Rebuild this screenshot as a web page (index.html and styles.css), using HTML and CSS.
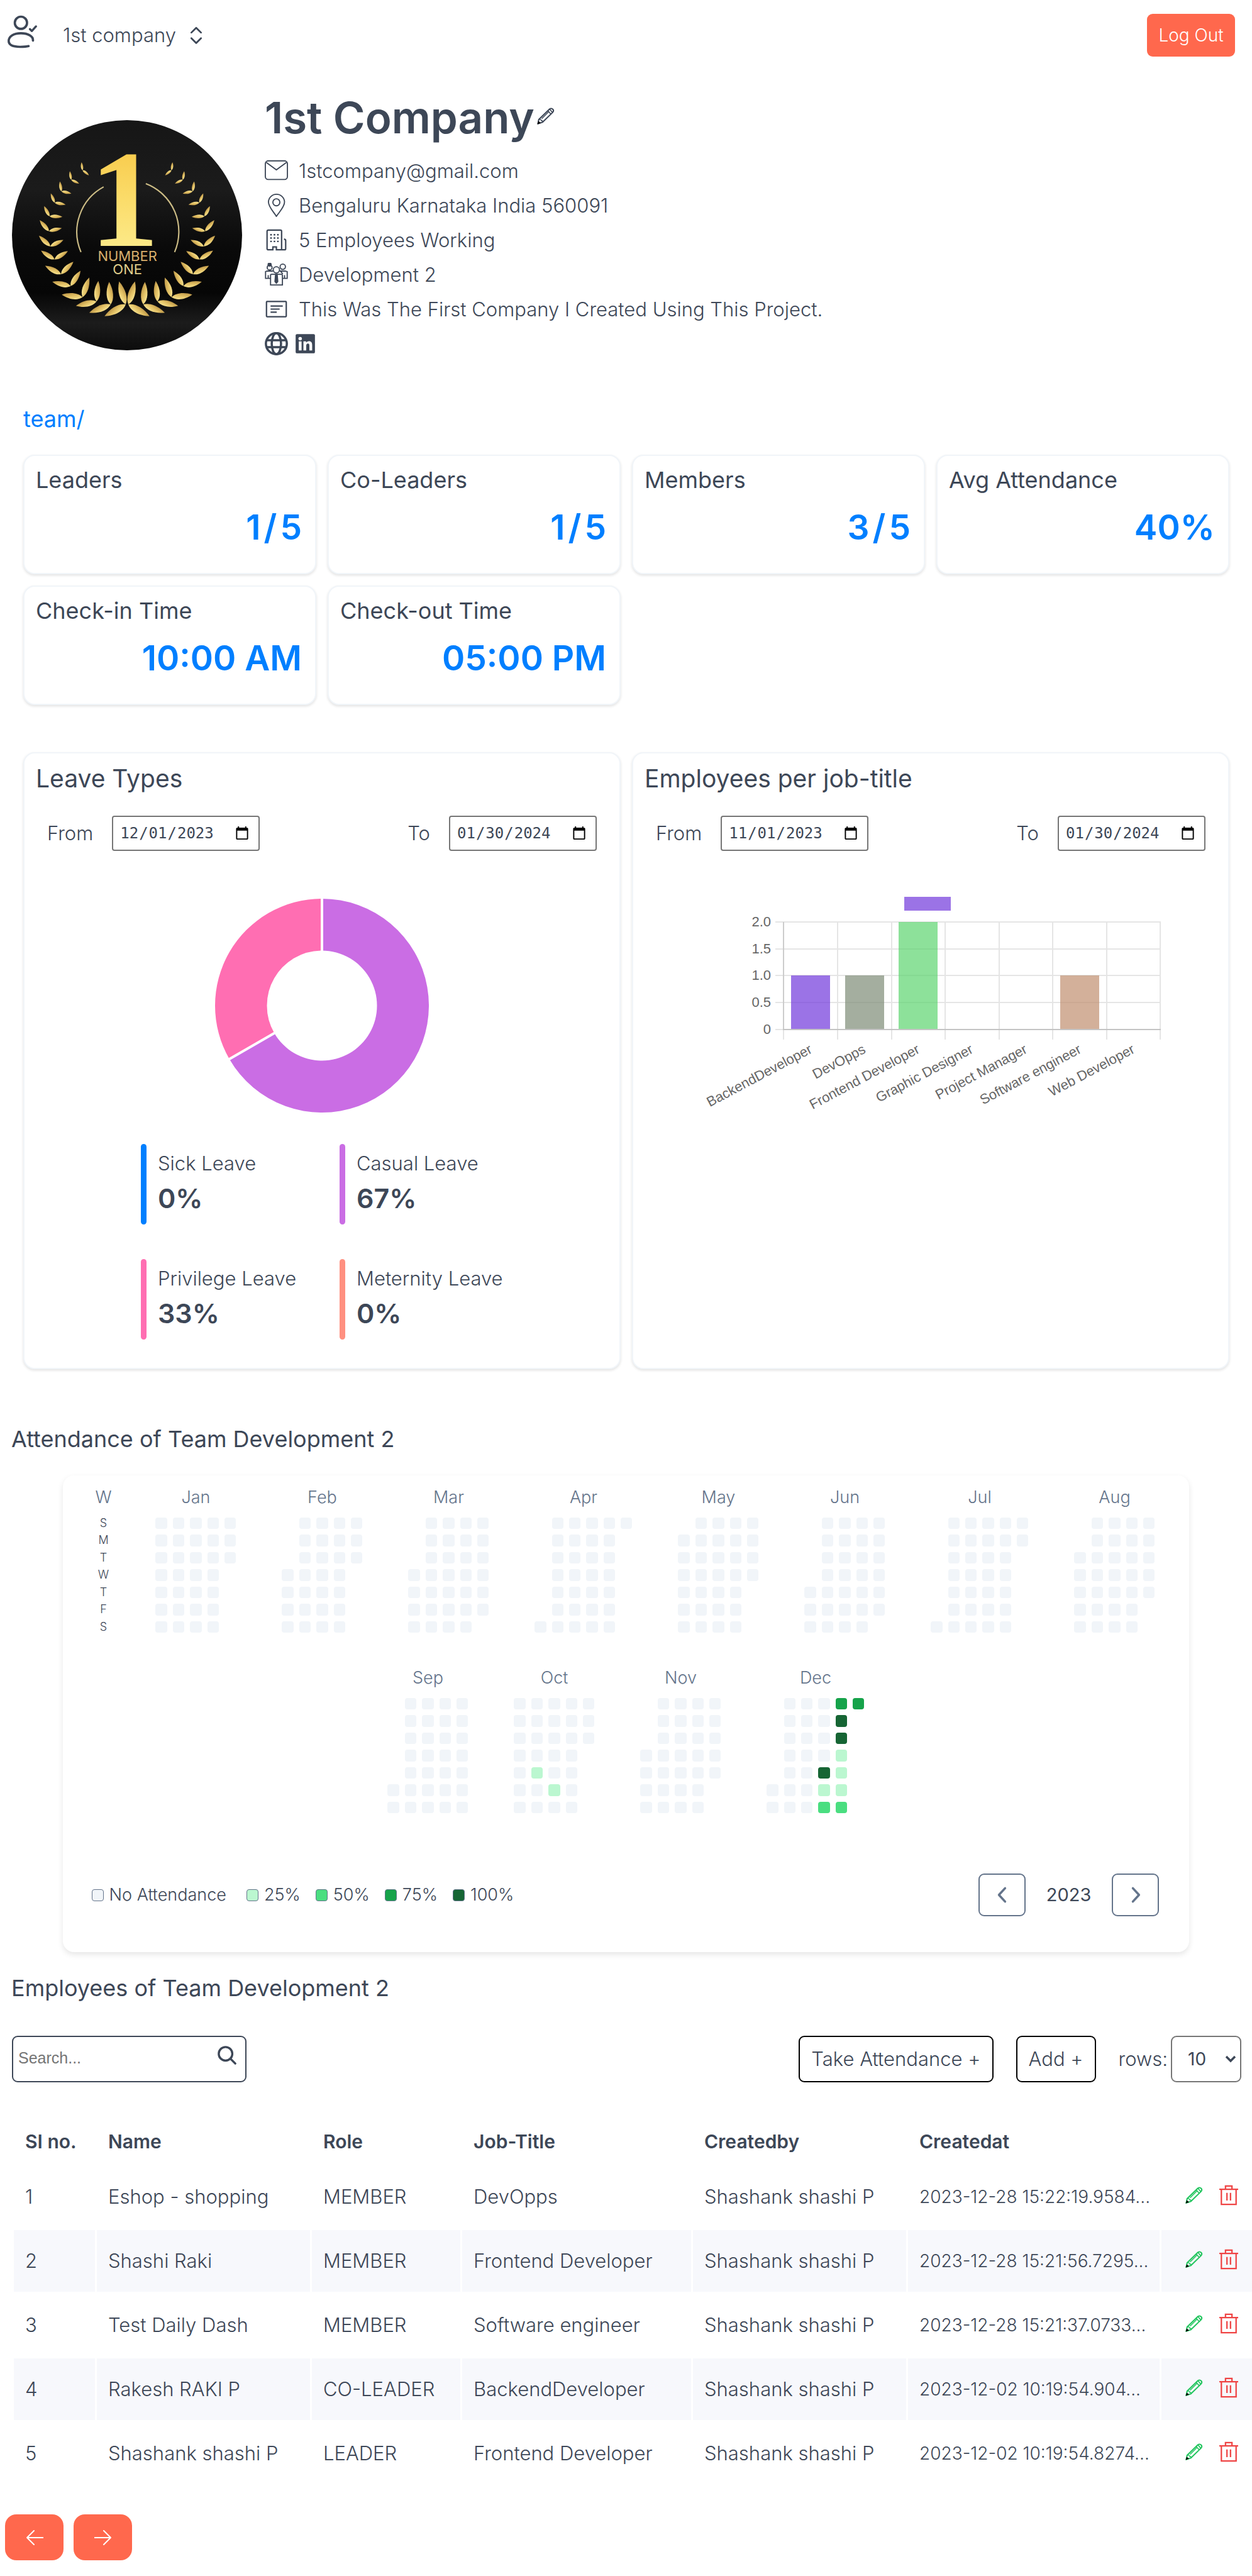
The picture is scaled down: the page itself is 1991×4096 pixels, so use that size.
FILE: index.html
```html
<!DOCTYPE html>
<html lang="en">
<head>
<meta charset="utf-8">
<meta name="viewport" content="width=device-width, initial-scale=1">
<title>1st company</title>
<link rel="stylesheet" href="styles.css">
</head>
<body>
<svg class="sprite" aria-hidden="true">
  <defs>
    <symbol id="i-pencil" viewBox="0 0 30 30">
      <path d="M3 21.500 L21.500 3.500 Q24.500 1.500 27 4 Q29.300 6.700 26.500 9.500 L9.500 26 L1.500 28.800 Z" fill="none" stroke="currentColor" stroke-width="2.200" stroke-linejoin="round"/>
      <path d="M18.500 6.500 L23.500 12 M21.500 4 L26.300 9.200" fill="none" stroke="currentColor" stroke-width="1.800"/>
      <path d="M3 21.500 Q7 20.500 7.500 23.500 Q10 23 9.500 26 M8 20 L19.500 8.500" fill="none" stroke="currentColor" stroke-width="1.600"/>
      <path d="M2.400 24 L6.500 27.200 L0.500 29.500 Z" fill="#000"/>
    </symbol>
    <symbol id="i-trash" viewBox="0 0 32 34">
      <path d="M0 7H32M3.500 7V32.500H28.500V7M10.500 7V1.500H21.500V7M13 13V26M19 13V26" fill="none" stroke="currentColor" stroke-width="2.400"/>
    </symbol>
    <linearGradient id="gold" x1="0" y1="0" x2="0" y2="1">
      <stop offset="0" stop-color="#f7c23c"/><stop offset=".5" stop-color="#fbdc6a"/><stop offset="1" stop-color="#fdf29a"/>
    </linearGradient>
    <linearGradient id="leafGold" x1="0" y1="0" x2="1" y2="1">
      <stop offset="0" stop-color="#fff0a0"/><stop offset=".5" stop-color="#e2c064"/><stop offset="1" stop-color="#a8803a"/>
    </linearGradient>
    <linearGradient id="slate" x1="0" y1="0" x2="0" y2="1">
      <stop offset="0" stop-color="#161616"/><stop offset=".3" stop-color="#1b1b1b"/><stop offset=".55" stop-color="#0a0a0a"/><stop offset=".75" stop-color="#060606"/><stop offset=".88" stop-color="#1c1c1c"/><stop offset="1" stop-color="#0c0c0c"/>
    </linearGradient>
    <path id="leaf" d="M0 0C22 -20 62 -20 100 0C62 18 22 18 0 0Z" fill="url(#leafGold)"/>
    <g id="branch">
      <use href="#leaf" transform="translate(430 318) rotate(-97) scale(.42)"/><use href="#leaf" transform="translate(430 318) rotate(39) scale(.43)"/>
      <use href="#leaf" transform="translate(371 368) rotate(-99) scale(.45)"/><use href="#leaf" transform="translate(371 368) rotate(26) scale(.46)"/>
      <use href="#leaf" transform="translate(320 428) rotate(-99) scale(.52)"/><use href="#leaf" transform="translate(320 428) rotate(13) scale(.53)"/>
      <use href="#leaf" transform="translate(285 487) rotate(-113) scale(.52)"/><use href="#leaf" transform="translate(285 487) rotate(11) scale(.58)"/>
      <use href="#leaf" transform="translate(258 558) rotate(-118) scale(.6)"/><use href="#leaf" transform="translate(258 558) rotate(3) scale(.67)"/>
      <use href="#leaf" transform="translate(255 636) rotate(-130) scale(.75)"/><use href="#leaf" transform="translate(255 636) rotate(-13) scale(.69)"/>
      <use href="#leaf" transform="translate(262 715) rotate(-137) scale(.81)"/><use href="#leaf" transform="translate(262 715) rotate(-26) scale(.76)"/>
      <use href="#leaf" transform="translate(284 783) rotate(-147) scale(.84)"/><use href="#leaf" transform="translate(284 783) rotate(-32) scale(.82)"/>
      <use href="#leaf" transform="translate(318 860) rotate(-152) scale(.94)"/><use href="#leaf" transform="translate(318 860) rotate(-45) scale(.91)"/>
      <use href="#leaf" transform="translate(368 922) rotate(-167) scale(.98)"/><use href="#leaf" transform="translate(368 922) rotate(-57) scale(.95)"/>
      <use href="#leaf" transform="translate(430 980) rotate(-173) scale(1.09)"/><use href="#leaf" transform="translate(430 980) rotate(-71) scale(1.08)"/>
      <use href="#leaf" transform="translate(503 1002) rotate(168) scale(1.1)"/><use href="#leaf" transform="translate(503 1002) rotate(-85) scale(1.07)"/>
      <use href="#leaf" transform="translate(577 1018) rotate(159) scale(1.2)"/><use href="#leaf" transform="translate(577 1018) rotate(-94) scale(1.18)"/>
      <use href="#leaf" transform="translate(655 1018) rotate(151) scale(1.26)"/><use href="#leaf" transform="translate(655 1018) rotate(-106) scale(1.25)"/>
    </g>
  </defs>
</svg>

<header class="topbar">
  <svg class="user-icon" viewBox="41 78 158 174" fill="none" stroke="currentColor" stroke-width="12" stroke-linecap="round" aria-hidden="true">
    <circle cx="111" cy="118" r="32"/>
    <path d="M174 211C176 188 148 173 111 173C70 173 47 191 47 213C47 238 75 244 107 244C127 244 141 243 151 240"/>
    <path d="M158 151L168 161L190 137" stroke-width="11" stroke-linejoin="round"/>
  </svg>
  <button class="company-switch" type="button">1st company
    <svg class="updown" viewBox="1000 136 64 94" fill="none" stroke="currentColor" stroke-width="9" stroke-linecap="round" stroke-linejoin="round" aria-hidden="true"><path d="M1007 168L1032 143L1057 168M1007 197L1032 222L1057 197"/></svg>
  </button>
  <button class="logout" type="button">Log Out</button>
</header>

<main>
<section class="profile">
  <svg class="avatar" viewBox="62 57 1200 1200" role="img" aria-label="Number one">
    <circle cx="662" cy="657" r="600" fill="url(#slate)"/>
    <use href="#branch"/>
    <use href="#branch" transform="translate(1324 0) scale(-1 1)"/>
    <path d="M540 405A267 267 0 0 0 422 745M760 388A268 268 0 0 1 910 745" fill="none" stroke="#cdbd86" stroke-width="7"/>
    <text class="logo-one" x="648" y="714">1</text>
    <text class="logo-word" x="664" y="790" fill="#d9ae6c">NUMBER</text>
    <text class="logo-word" x="664" y="860" fill="#e0cf8c">ONE</text>
  </svg>
  <div class="profile-body">
    <div class="name-row">
      <h1>1st Company</h1>
      <button class="icon-btn" type="button" aria-label="Edit company"><svg class="icon-28"><use href="#i-pencil"/></svg></button>
    </div>
    <ul class="facts">
      <li><svg class="fact-icon" viewBox="0 0 20 20" fill="none" stroke="currentColor"><rect x=".5" y="1.500" width="19" height="16" rx="2.500"/><path d="M1.300 2.800L10 9.200L18.700 2.800"/></svg>1stcompany@gmail.com</li>
      <li><svg class="fact-icon" viewBox="0 0 20 20" fill="none" stroke="currentColor"><path d="M10 19.500C8 16 3.200 11.500 3.200 7.200A6.900 6.700 0 0 1 17 7.200C17 11.500 12.200 16 10 19.500Z"/><circle cx="10" cy="7.400" r="3"/></svg>Bengaluru Karnataka India 560091</li>
      <li><svg class="fact-icon" viewBox="0 0 20 20" fill="none" stroke="currentColor" stroke-width="1.200"><path d="M7 18.500H3A1 1 0 0 1 2 17.500V2.500A1 1 0 0 1 3 1.500H13.500A1 1 0 0 1 14.500 2.500V18.500H10V16H7ZM14.500 18.500H17A1 1 0 0 0 18 17.500V10.500Q18 9.500 16.500 9.300"/><path d="M4.700 5.500H12M4.700 8.400H12M4.700 11.300H12" stroke-width="1.300" stroke-dasharray="1.400 1.550"/></svg>5 Employees Working</li>
      <li><svg class="fact-icon" viewBox="0 0 20 20" fill="none" stroke="currentColor" stroke-width="1"><circle cx="4.200" cy="4" r="2.100"/><circle cx="4.200" cy="1.500" r="1.300" fill="currentColor"/><circle cx="15.500" cy="3.300" r="2.300"/><circle cx="10" cy="6" r="2.700" fill="#fff"/><path d="M7 7H2L.7 7.500V13.300H4.800M13 7H17.500L19.300 7.500V13.300H15.500M3 10.500V13M17 10.500V13M5 10V19H15.200V10.500Q15 9.800 14 9.800H6Q5 9.800 5 10.500M13.500 7L15.500 9.500"/><path d="M9.300 10H10.700L11.200 16L10 17.500L8.800 16Z" fill="currentColor"/></svg>Development 2</li>
      <li><svg class="fact-icon" viewBox="0 0 20 20" fill="none" stroke="currentColor" stroke-width="1.200"><rect x="1.500" y="3.500" width="17" height="13" rx=".5"/><path d="M5 7.400H15.500M5 10H12.800M5 12.600H10.300"/></svg>This Was The First Company I Created Using This Project.</li>
    </ul>
    <div class="socials">
      <a href="#website" aria-label="Website"><svg class="fact-icon" viewBox="0 0 20 20" fill="none" stroke="currentColor" stroke-width="1.900"><circle cx="10" cy="10" r="9"/><ellipse cx="10" cy="10" rx="4" ry="9"/><path d="M1.500 7H18.500M1.500 13H18.500"/></svg></a>
      <a href="#linkedin" aria-label="LinkedIn"><svg class="fact-icon" viewBox="0 0 20 20"><rect x="1.700" y="1.700" width="16.600" height="16.600" rx="1.200" fill="currentColor"/><g fill="#fff"><circle cx="5.600" cy="5.700" r="1.500"/><rect x="4.400" y="8" width="2.400" height="7.800"/><path d="M8.400 8H10.700V9.100C11.200 8.300 12 7.800 13.100 7.800C15.200 7.800 15.900 9.100 15.900 11.200V15.800H13.500V11.700C13.500 10.600 13.300 9.900 12.300 9.900C11.300 9.900 10.800 10.600 10.800 11.700V15.800H8.400Z"/></g></svg></a>
    </div>
  </div>
</section>

<section class="overview">
  <a class="crumb" href="#team">team/</a>
  <div class="stats">
    <article class="card stat"><h2>Leaders</h2><p><span>1</span><span>/</span><span>5</span></p></article>
    <article class="card stat"><h2>Co-Leaders</h2><p><span>1</span><span>/</span><span>5</span></p></article>
    <article class="card stat"><h2>Members</h2><p><span>3</span><span>/</span><span>5</span></p></article>
    <article class="card stat"><h2>Avg Attendance</h2><p>40%</p></article>
    <article class="card stat"><h2>Check-in Time</h2><p>10:00 AM</p></article>
    <article class="card stat"><h2>Check-out Time</h2><p>05:00 PM</p></article>
  </div>

  <div class="charts">
    <article class="card chart">
      <h2>Leave Types</h2>
      <div class="range">
        <label>From <input type="date" value="2023-12-01"></label>
        <label>To <input type="date" value="2024-01-30"></label>
      </div>
      <svg class="donut" viewBox="0 0 340 340" role="img" aria-label="Leave types: casual 67%, privilege 33%">
        <path d="M170 0A170 170 0 1 1 22.780 255L94.220 213.750A87.500 87.500 0 1 0 170 82.500Z" fill="#ca6de4"/>
        <path d="M22.780 255A170 170 0 0 1 170 0V82.500A87.500 87.500 0 0 0 94.220 213.750Z" fill="#ff6eb2"/>
        <path d="M170 -2V84M21 256L96 212.700" stroke="#fff" stroke-width="4"/>
      </svg>
      <ul class="leave-legend">
        <li class="sick"><span>Sick Leave</span><strong>0%</strong></li>
        <li class="casual"><span>Casual Leave</span><strong>67%</strong></li>
        <li class="privilege"><span>Privilege Leave</span><strong>33%</strong></li>
        <li class="maternity"><span>Meternity Leave</span><strong>0%</strong></li>
      </ul>
    </article>

    <article class="card chart">
      <h2>Employees per job-title</h2>
      <div class="range">
        <label>From <input type="date" value="2023-11-01"></label>
        <label>To <input type="date" value="2024-01-30"></label>
      </div>
      <svg class="bars" viewBox="0 0 732 366" role="img" aria-label="Employees per job title">
        <g stroke="#000" stroke-opacity=".1" stroke-width="2">
          <path d="M119 58H732M119 101H732M119 143H732M119 186H732M218 58V245M304 58V245M389 58V245M475 58V245M560 58V245M646 58V245M731 58V245"/>
          <path d="M119 229H132M132 229V245"/>
        </g>
        <path d="M132 58V229" stroke="#ccc" stroke-width="2"/><path d="M131 229H732" stroke="#c4c4c4" stroke-width="2"/>
        <g fill-opacity=".7">
          <rect x="324" y="18" width="74" height="22" fill="#7038db"/>
          <rect x="144" y="143" width="62" height="85" fill="#7038db"/>
          <rect x="230" y="143" width="62" height="85" fill="#7d8b76"/>
          <rect x="315" y="58" width="62" height="170" fill="#5cd46f"/>
          <rect x="572" y="143" width="62" height="85" fill="#c08e6f"/>
        </g>
        <g class="axis">
          <text x="112" y="65">2.0</text><text x="112" y="108">1.5</text><text x="112" y="150">1.0</text><text x="112" y="193">0.5</text><text x="112" y="236">0</text>
          <text transform="translate(179 265) rotate(-28)">BackendDeveloper</text>
          <text transform="translate(264 265) rotate(-28)">DevOpps</text>
          <text transform="translate(350 265) rotate(-28)">Frontend Developer</text>
          <text transform="translate(435 265) rotate(-28)">Graphic Designer</text>
          <text transform="translate(521 265) rotate(-28)">Project Manager</text>
          <text transform="translate(607 265) rotate(-28)">Software engineer</text>
          <text transform="translate(692 265) rotate(-28)">Web Developer</text>
        </g>
      </svg>
    </article>
  </div>
</section>

<section class="attendance">
  <h2 class="section-title">Attendance of Team Development 2</h2>
  <div class="calendar">
    <div class="months" id="months">
      <div class="weekdays">
        <h3>W</h3>
        <div class="days"><span>S</span><span>M</span><span>T</span><span>W</span><span>T</span><span>F</span><span>S</span></div>
      </div>
    </div>
    <div class="calendar-footer">
      <ul class="levels">
        <li><i class="l0"></i>No Attendance</li>
        <li><i class="l25"></i>25%</li>
        <li><i class="l50"></i>50%</li>
        <li><i class="l75"></i>75%</li>
        <li><i class="l100"></i>100%</li>
      </ul>
      <div class="year">
        <button type="button" aria-label="Previous year"><svg class="chev" viewBox="0 0 18 30"><path d="M15 3L4 15L15 27"/></svg></button>
        <span>2023</span>
        <button type="button" aria-label="Next year"><svg class="chev" viewBox="0 0 18 30"><path d="M4 3L15 15L4 27"/></svg></button>
      </div>
    </div>
  </div>
</section>

<section class="employees">
  <h2 class="section-title">Employees of Team Development 2</h2>
  <div class="toolbar">
    <label class="search">
      <input type="search" placeholder="Search..." aria-label="Search employees">
      <svg class="search-icon" viewBox="0 0 32 32" fill="none" stroke="currentColor" stroke-width="3.600" stroke-linecap="round"><circle cx="13.500" cy="13.500" r="11.500"/><path d="M22 22L30 30"/></svg>
    </label>
    <button class="outline" type="button">Take Attendance +</button>
    <button class="outline" type="button">Add +</button>
    <label class="rows">rows:
      <span class="select">
        <select><option>10</option><option>20</option><option>50</option></select>
        <svg viewBox="0 0 18 12" aria-hidden="true"><path d="M2 2L9 9L16 2" fill="none" stroke="currentColor" stroke-width="3.400"/></svg>
      </span>
    </label>
  </div>
  <div class="table-wrap">
    <table>
      <colgroup><col class="c-no"><col class="c-name"><col class="c-role"><col class="c-job"><col class="c-by"><col class="c-at"><col></colgroup>
      <thead><tr><th>SI no.</th><th>Name</th><th>Role</th><th>Job-Title</th><th>Createdby</th><th>Createdat</th><th></th></tr></thead>
      <tbody>
        <tr><td>1</td><td>Eshop - shopping</td><td>MEMBER</td><td>DevOpps</td><td>Shashank shashi P</td><td class="stamp">2023-12-28 15:22:19.9584...</td>
          <td><div class="actions"><button class="icon-btn edit" type="button" aria-label="Edit"><svg class="icon-28"><use href="#i-pencil"/></svg></button><button class="icon-btn del" type="button" aria-label="Delete"><svg class="icon-trash"><use href="#i-trash"/></svg></button></div></td></tr>
        <tr><td>2</td><td>Shashi Raki</td><td>MEMBER</td><td>Frontend Developer</td><td>Shashank shashi P</td><td class="stamp">2023-12-28 15:21:56.7295...</td>
          <td><div class="actions"><button class="icon-btn edit" type="button" aria-label="Edit"><svg class="icon-28"><use href="#i-pencil"/></svg></button><button class="icon-btn del" type="button" aria-label="Delete"><svg class="icon-trash"><use href="#i-trash"/></svg></button></div></td></tr>
        <tr><td>3</td><td>Test Daily Dash</td><td>MEMBER</td><td>Software engineer</td><td>Shashank shashi P</td><td class="stamp">2023-12-28 15:21:37.0733...</td>
          <td><div class="actions"><button class="icon-btn edit" type="button" aria-label="Edit"><svg class="icon-28"><use href="#i-pencil"/></svg></button><button class="icon-btn del" type="button" aria-label="Delete"><svg class="icon-trash"><use href="#i-trash"/></svg></button></div></td></tr>
        <tr><td>4</td><td>Rakesh RAKI P</td><td>CO-LEADER</td><td>BackendDeveloper</td><td>Shashank shashi P</td><td class="stamp">2023-12-02 10:19:54.904...</td>
          <td><div class="actions"><button class="icon-btn edit" type="button" aria-label="Edit"><svg class="icon-28"><use href="#i-pencil"/></svg></button><button class="icon-btn del" type="button" aria-label="Delete"><svg class="icon-trash"><use href="#i-trash"/></svg></button></div></td></tr>
        <tr><td>5</td><td>Shashank shashi P</td><td>LEADER</td><td>Frontend Developer</td><td>Shashank shashi P</td><td class="stamp">2023-12-02 10:19:54.8274...</td>
          <td><div class="actions"><button class="icon-btn edit" type="button" aria-label="Edit"><svg class="icon-28"><use href="#i-pencil"/></svg></button><button class="icon-btn del" type="button" aria-label="Delete"><svg class="icon-trash"><use href="#i-trash"/></svg></button></div></td></tr>
      </tbody>
    </table>
  </div>
  <nav class="pager" aria-label="Pages">
    <button type="button" aria-label="Previous page"><svg viewBox="0 0 28 24"><path d="M13 1L2 12L13 23M2 12H28"/></svg></button>
    <button type="button" aria-label="Next page"><svg viewBox="0 0 28 24"><path d="M15 1L26 12L15 23M26 12H0"/></svg></button>
  </nav>
</section>
</main>
<script src="calendar.js"></script>
</body>
</html>
```
FILE: calendar.js
```js
// Builds one block per month: a label and a grid of days, a column per week.
const YEAR = 2023;
const NAMES = ["Jan", "Feb", "Mar", "Apr", "May", "Jun", "Jul", "Aug", "Sep", "Oct", "Nov", "Dec"];
const ATTENDANCE = {
  "10-12": 25, "10-20": 25,
  "12-21": 100, "12-22": 25, "12-23": 50, "12-24": 75, "12-25": 100, "12-26": 100,
  "12-27": 25, "12-28": 25, "12-29": 25, "12-30": 50, "12-31": 75
};
const host = document.getElementById("months");
NAMES.forEach((name, m) => {
  const first = new Date(YEAR, m, 1).getDay();
  const count = new Date(YEAR, m + 1, 0).getDate();
  const block = document.createElement("div");
  block.className = first + count > 35 ? "month six-weeks" : "month";
  const title = document.createElement("h3");
  title.textContent = name;
  const days = document.createElement("div");
  days.className = "days";
  for (let d = 1; d <= count; d++) {
    const cell = document.createElement("i");
    cell.className = "l" + (ATTENDANCE[(m + 1) + "-" + d] || 0);
    if (d === 1) cell.style.gridRowStart = first + 1;
    days.append(cell);
  }
  block.append(title, days);
  host.append(block);
});
```
FILE: styles.css
```css
:root {
  --ink: #3d4757;
  --muted: #64748b;
  --blue: #007fff;
  --coral: #ff684d;
}
* { box-sizing: border-box; }
body {
  margin: 0;
  background: #fff;
  color: var(--ink);
  font-family: Inter, "Open Sans", sans-serif;
  font-size: 31px;
  font-weight: 300;
  line-height: 36px;
}
h1, h2, h3, p, ul { margin: 0; padding: 0; }
ul { list-style: none; }
button, select { font: inherit; color: inherit; background: none; border: 0; padding: 0; }
a { color: inherit; text-decoration: none; }
svg { display: block; flex: none; }
.sprite { position: absolute; width: 0; height: 0; }
.icon-btn { display: block; }
.icon-28 { width: 28px; height: 28px; }
.icon-trash { width: 30px; height: 33px; }

/* Top bar */
.topbar { display: flex; align-items: center; height: 112px; padding: 0 27px 0 12px; }
.user-icon { width: 48px; height: 53px; margin-bottom: 12px; }
.company-switch { display: flex; align-items: center; gap: 22px; margin-left: 40px; }
.updown { width: 20px; height: 29px; }
.logout {
  margin-left: auto;
  width: 140px;
  height: 68px;
  border-radius: 9px;
  background: var(--coral);
  color: #fff;
  font-size: 28px;
}

/* Profile */
.profile { display: flex; gap: 36px; padding: 35px 19px 0; }
.avatar { width: 366px; height: 366px; margin-top: 44px; }
.logo-one { font: bold 725px "Liberation Serif", serif; fill: url(#gold); text-anchor: middle; }
.logo-word { font: 400 72px/1 Inter, sans-serif; text-anchor: middle; }
.name-row { display: flex; align-items: flex-start; gap: 4px; height: 80px; padding-top: 23px; }
.name-row h1 { margin-top: -23px; font-size: 69px; line-height: 80px; font-weight: 600; }
.facts { display: grid; gap: 18px; margin-top: 26px; }
.facts li { display: flex; align-items: center; gap: 17px; height: 37px; }
.fact-icon { width: 37px; height: 37px; }
.socials { display: flex; gap: 9px; margin-top: 18px; }

/* Cards */
.overview { padding: 81px 36px 0 37px; }
.crumb { display: block; color: var(--blue); font-size: 36px; line-height: 40px; font-weight: 400; }
.card {
  border: 2px solid #f1f5f9;
  border-radius: 18px;
  background: #fff;
  box-shadow: 0 2px 4px rgba(0, 0, 0, .12);
}
.stats { display: grid; grid-template-columns: repeat(4, 1fr); gap: 18px; margin-top: 37px; }
.stat { height: 190px; padding: 16px 18px; }
.stat h2 { font-size: 36px; line-height: 44px; font-weight: 400; }
.stat p { display: flex; justify-content: flex-end; gap: 5px; margin-top: 23px; padding-right: 3px; color: var(--blue); font-size: 55px; line-height: 60px; font-weight: 600; }
.charts { display: grid; grid-template-columns: 1fr 1fr; gap: 18px; margin-top: 75px; }
.chart { padding: 18px 18px 45px; }
.chart h2 { font-size: 39px; line-height: 44px; font-weight: 400; }
.range { display: flex; justify-content: space-between; margin-top: 37px; padding: 0 18px; }
.range label { display: flex; align-items: center; gap: 30px; }
.range input {
  width: 235px;
  height: 56px;
  padding: 0 12px 0 10px;
  border: 2px solid #767676;
  border-radius: 4px;
  background: #fff;
  color: var(--ink);
  font: 24px "DejaVu Sans Mono", monospace;
}
.donut { width: 340px; height: 340px; margin: 76px auto 0; }
.leave-legend { display: grid; grid-template-columns: 246px 260px; gap: 55px 70px; justify-content: center; margin-top: 50px; }
.leave-legend li { display: flex; flex-direction: column; justify-content: center; gap: 13px; position: relative; height: 128px; padding: 0 0 5px 27px; white-space: nowrap; }
.leave-legend li::before { content: ""; position: absolute; inset: 0 auto 0 0; width: 9px; border-radius: 5px; background: currentColor; }
.leave-legend span, .leave-legend strong { color: var(--ink); }
.leave-legend strong { font-size: 43px; line-height: 48px; font-weight: 600; }
.leave-legend .sick { color: var(--blue); }
.leave-legend .casual { color: #ca6de4; }
.leave-legend .privilege { color: #ff6eb2; }
.leave-legend .maternity { color: #ff9080; }
.bars { width: 732px; height: 366px; margin: 55px auto 0; overflow: visible; }
.axis text { font: 22px "Liberation Sans", sans-serif; fill: #666; text-anchor: end; }

/* Attendance calendar */
.section-title { font-size: 36px; line-height: 44px; font-weight: 400; }
.attendance { padding-top: 89px; }
.attendance .section-title { padding-left: 18px; }
.calendar {
  width: 90%;
  margin: 36px auto 0;
  padding: 20px 48px 57px 46px;
  border-radius: 18px;
  box-shadow: 0 4px 10px rgba(0, 0, 0, .1);
}
.months { display: flex; flex-wrap: wrap; justify-content: center; gap: 57px 73px; margin-right: -2px; }
.months h3 { color: var(--muted); font-size: 27px; line-height: 30px; font-weight: 300; text-align: center; }
.weekdays { width: 20px; }
.weekdays h3 { display: flex; justify-content: center; }
.month { width: 128px; }
.six-weeks { width: 155px; }
.days { display: grid; grid-template-rows: repeat(7, 1fr); grid-auto-flow: column; grid-auto-columns: 1fr; gap: 9px; height: 183px; margin-top: 17px; }
.days span { font-size: 18px; line-height: 18px; text-align: center; }
.days i { border-radius: 4px; }
.l0 { background: #f1f5f9; }
.l25 { background: #bbf7d0; }
.l50 { background: #4ade80; }
.l75 { background: #16a34a; }
.l100 { background: #166534; }
.calendar-footer { display: flex; align-items: center; justify-content: space-between; margin-top: 96px; }
.levels { display: flex; gap: 24px; font-size: 27px; }
.levels li { display: flex; align-items: center; gap: 9px; }
.levels li:first-child { padding-right: 8px; }
.levels i { width: 19px; height: 19px; border: 1px solid var(--muted); border-radius: 4px; }
.year { display: flex; align-items: center; gap: 33px; font-size: 29px; font-weight: 400; }
.year button { display: grid; place-items: center; width: 75px; height: 68px; border: 2px solid var(--muted); border-radius: 9px; }
.chev { width: 16px; height: 28px; fill: none; stroke: var(--muted); stroke-width: 4; stroke-linecap: round; stroke-linejoin: round; }

/* Employees */
.employees { padding-top: 35px; }
.employees .section-title { padding-left: 18px; }
.toolbar { display: flex; align-items: center; gap: 36px; margin-top: 54px; padding: 0 17px 0 19px; }
.search { display: flex; align-items: center; width: 373px; height: 74px; margin-right: auto; padding: 0 14px 0 8px; border: 2px solid var(--ink); border-radius: 9px; }
.search input { flex: 1; min-width: 0; padding: 0 0 4px; border: 0; outline: 0; background: none; color: var(--ink); font: 25px "Liberation Sans", sans-serif; }
.search input::placeholder { color: #757575; }
.search-icon { width: 30px; height: 30px; margin-bottom: 12px; }
.outline { height: 74px; padding: 0 18px; border: 2px solid #000; border-radius: 9px; }
.rows { display: flex; align-items: center; gap: 5px; }
.select { display: grid; align-items: center; width: 112px; height: 74px; }
.select select, .select svg { grid-area: 1 / 1; }
.select select { appearance: none; width: 100%; height: 100%; padding-left: 25px; border: 2px solid #767676; border-radius: 9px; font-size: 28px; font-weight: 400; }
.select svg { width: 18px; height: 12px; margin-right: 8px; justify-self: end; pointer-events: none; }
.table-wrap { margin: 55px 0 0 19px; overflow: hidden; }
table { width: calc(100% + 3px); table-layout: fixed; border-collapse: separate; border-spacing: 3px 4px; }
.c-no { width: 129px; }
.c-name, .c-by { width: 339px; }
.c-role { width: 236px; }
.c-job { width: 364px; }
.c-at { width: 400px; }
th, td { padding: 0 0 0 18px; text-align: left; white-space: nowrap; }
th { height: 70px; font-weight: 600; font-size: 30px; }
td { height: 98px; }
.stamp { font-size: 28px; }
tbody tr:nth-child(even) td { background: #f7f8fc; }
.actions { display: flex; align-items: center; gap: 26px; padding: 0 0 6px 20px; }
.edit { color: #22c55e; }
.del { color: #ef4444; }
.pager { display: flex; gap: 16px; padding: 44px 8px 26px; }
.pager button { display: grid; place-items: center; width: 93px; height: 73px; border-radius: 18px; background: var(--coral); }
.pager svg { width: 28px; height: 24px; fill: none; stroke: #fff; stroke-width: 2; stroke-linecap: round; stroke-linejoin: round; }
```
